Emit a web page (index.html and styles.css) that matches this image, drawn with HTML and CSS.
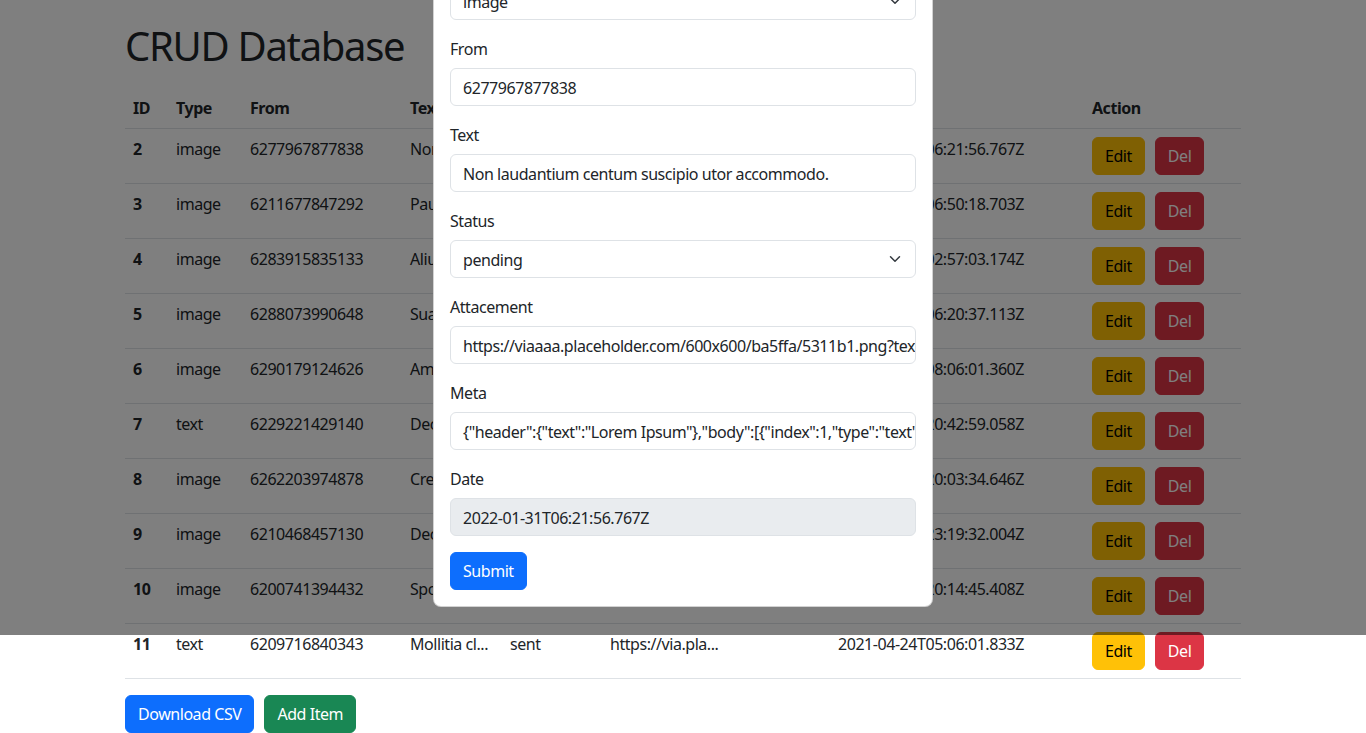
FILE: index.html
```html
<!DOCTYPE html>
<html lang="en">
<head>
<meta charset="utf-8">
<title>CRUD Database</title>
<link rel="stylesheet" href="styles.css">
</head>
<body>
<div class="container">
  <h1 class="title">CRUD Database</h1>
  <table class="table">
    <colgroup>
      <col class="c-id"><col class="c-type"><col class="c-from"><col class="c-text"><col class="c-status"><col class="c-att"><col class="c-date"><col class="c-act">
    </colgroup>
    <thead>
      <tr><th>ID</th><th>Type</th><th>From</th><th>Text</th><th>Status</th><th>Attachment</th><th>Date</th><th>Action</th></tr>
    </thead>
    <tbody>
      <tr><th>2</th><td>image</td><td>6277967877838</td><td>Non laudan...</td><td>pending</td><td>https://via.pla...</td><td>2022-01-31T06:21:56.767Z</td><td><button class="btn btn-warning">Edit</button><button class="btn btn-danger">Del</button></td></tr>
      <tr><th>3</th><td>image</td><td>6211677847292</td><td>Paulatim v...</td><td>sent</td><td>https://via.pla...</td><td>2021-11-08T06:50:18.703Z</td><td><button class="btn btn-warning">Edit</button><button class="btn btn-danger">Del</button></td></tr>
      <tr><th>4</th><td>image</td><td>6283915835133</td><td>Aliud quid...</td><td>sent</td><td>https://via.pla...</td><td>2021-09-14T02:57:03.174Z</td><td><button class="btn btn-warning">Edit</button><button class="btn btn-danger">Del</button></td></tr>
      <tr><th>5</th><td>image</td><td>6288073990648</td><td>Suasoria c...</td><td>pending</td><td>https://via.pla...</td><td>2021-07-22T06:20:37.113Z</td><td><button class="btn btn-warning">Edit</button><button class="btn btn-danger">Del</button></td></tr>
      <tr><th>6</th><td>image</td><td>6290179124626</td><td>Amplus de...</td><td>sent</td><td>https://via.pla...</td><td>2021-06-30T08:06:01.360Z</td><td><button class="btn btn-warning">Edit</button><button class="btn btn-danger">Del</button></td></tr>
      <tr><th>7</th><td>text</td><td>6229221429140</td><td>Decorus v...</td><td>sent</td><td>https://via.pla...</td><td>2021-06-12T20:42:59.058Z</td><td><button class="btn btn-warning">Edit</button><button class="btn btn-danger">Del</button></td></tr>
      <tr><th>8</th><td>image</td><td>6262203974878</td><td>Creo spir...</td><td>pending</td><td>https://via.pla...</td><td>2021-05-28T20:03:34.646Z</td><td><button class="btn btn-warning">Edit</button><button class="btn btn-danger">Del</button></td></tr>
      <tr><th>9</th><td>image</td><td>6210468457130</td><td>Decens co...</td><td>sent</td><td>https://via.pla...</td><td>2021-05-16T23:19:32.004Z</td><td><button class="btn btn-warning">Edit</button><button class="btn btn-danger">Del</button></td></tr>
      <tr><th>10</th><td>image</td><td>6200741394432</td><td>Sponte vi...</td><td>sent</td><td>https://via.pla...</td><td>2021-05-02T20:14:45.408Z</td><td><button class="btn btn-warning">Edit</button><button class="btn btn-danger">Del</button></td></tr>
      <tr><th>11</th><td>text</td><td>6209716840343</td><td>Mollitia cl...</td><td>sent</td><td>https://via.pla...</td><td>2021-04-24T05:06:01.833Z</td><td><button class="btn btn-warning">Edit</button><button class="btn btn-danger">Del</button></td></tr>
    </tbody>
  </table>
  <div class="actions">
    <button class="btn btn-primary">Download CSV</button>
    <button class="btn btn-success">Add Item</button>
  </div>
</div>

<div class="backdrop"></div>

<div class="modal">
  <div class="modal-content">
    <div class="modal-body">
      <div class="field">
        <label class="form-label">Type</label>
        <div class="form-control form-select"><span>image</span>
          <svg class="chev" width="16" height="12" viewBox="0 0 16 16"><path d="m2 5 6 6 6-6" fill="none" stroke="#343a40" stroke-linecap="round" stroke-linejoin="round" stroke-width="2"/></svg>
        </div>
      </div>
      <div class="field">
        <label class="form-label">From</label>
        <div class="form-control">6277967877838</div>
      </div>
      <div class="field">
        <label class="form-label">Text</label>
        <div class="form-control">Non laudantium centum suscipio utor accommodo.</div>
      </div>
      <div class="field">
        <label class="form-label">Status</label>
        <div class="form-control form-select"><span>pending</span>
          <svg class="chev" width="16" height="12" viewBox="0 0 16 16"><path d="m2 5 6 6 6-6" fill="none" stroke="#343a40" stroke-linecap="round" stroke-linejoin="round" stroke-width="2"/></svg>
        </div>
      </div>
      <div class="field">
        <label class="form-label">Attacement</label>
        <div class="form-control">https://viaaaa.placeholder.com/600x600/ba5ffa/5311b1.png?text=Lorem</div>
      </div>
      <div class="field">
        <label class="form-label">Meta</label>
        <div class="form-control">{"header":{"text":"Lorem Ipsum"},"body":[{"index":1,"type":"text","value":"x"}]}</div>
      </div>
      <div class="field">
        <label class="form-label">Date</label>
        <div class="form-control disabled">2022-01-31T06:21:56.767Z</div>
      </div>
      <button class="btn btn-primary">Submit</button>
    </div>
  </div>
</div>
</body>
</html>
```

FILE: styles.css
```css
* { box-sizing: border-box; }
html, body { margin: 0; padding: 0; }
body {
  font-family: "Noto Sans", "Open Sans", sans-serif;
  font-size: 16px;
  line-height: 1.5;
  letter-spacing: -0.45px;
  color: #212529;
  background: #fff;
  position: relative;
  min-height: 733px;
  overflow: hidden;
}
.container {
  width: 1140px;
  margin: 0 auto;
  padding: 0 12px;
}
.title {
  font-size: 40px;
  font-weight: 400;
  line-height: 48px;
  letter-spacing: -1.3px;
  margin: 22px 0 18px;
}
.table {
  width: 100%;
  border-collapse: collapse;
  table-layout: fixed;
  vertical-align: top;
  margin-bottom: 16px;
}
.c-id { width: 43px; }
.c-type { width: 74px; }
.c-from { width: 160px; }
.c-text { width: 100px; }
.c-status { width: 100px; }
.c-att { width: 228px; }
.c-date { width: 254px; }
.c-act { width: 157px; }
.table th, .table td {
  padding: 8px;
  border-bottom: 1px solid #dee2e6;
  text-align: left;
  white-space: nowrap;
  overflow: hidden;
  vertical-align: top;
}
.table th { font-weight: 700; }
.table td { font-weight: 400; }
.btn {
  display: inline-block;
  font-family: inherit;
  font-size: 16px;
  line-height: 24px;
  letter-spacing: -0.45px;
  padding: 6px 12px;
  border: 1px solid transparent;
  border-radius: 6px;
  cursor: pointer;
}
.table .btn + .btn { margin-left: 10px; }
.btn-warning { background: #ffc107; border-color: #ffc107; color: #000; }
.btn-danger { background: #dc3545; border-color: #dc3545; color: #fff; }
.btn-primary { background: #0d6efd; border-color: #0d6efd; color: #fff; }
.btn-success { background: #198754; border-color: #198754; color: #fff; }
.actions { display: flex; gap: 10px; }
.backdrop {
  position: absolute;
  left: 0; top: 0;
  width: 100%;
  height: 635px;
  background: rgba(0, 0, 0, 0.5);
}
.modal {
  position: absolute;
  top: -67px;
  left: 0;
  width: 100%;
}
.modal-content {
  width: 500px;
  margin: 0 auto;
  background: #fff;
  border: 1px solid rgba(0, 0, 0, 0.175);
  border-radius: 8px;
}
.modal-body { padding: 16px; }
.field { margin-bottom: 16px; }
.form-label { display: block; margin-bottom: 8px; padding-top: 1px; height: 24px; }
.form-control {
  display: block;
  width: 100%;
  height: 38px;
  padding: 7px 12px 5px;
  border: 1px solid #dee2e6;
  border-radius: 6px;
  background: #fff;
  white-space: nowrap;
  overflow: hidden;
}
.form-select {
  display: flex;
  align-items: center;
  justify-content: space-between;
  padding-top: 6px;
  padding-bottom: 6px;
}
.form-select span { position: relative; top: 1px; }
.form-control.disabled { background: #e9ecef; }
```
